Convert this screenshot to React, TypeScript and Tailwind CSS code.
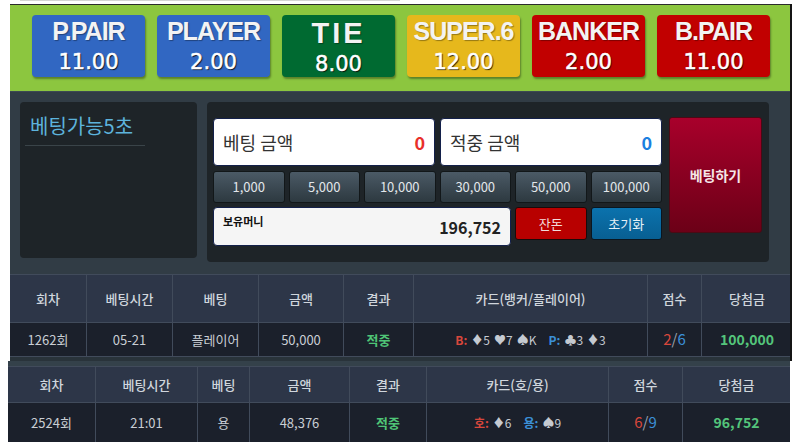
import React from 'react';

const KR = { fontFamily: '"Noto Sans CJK KR", "Noto Sans", sans-serif' };

interface Odd {
  label: string;
  value: string;
  bg: string;
  big?: boolean;
}

const odds: Odd[] = [
  { label: 'P.PAIR', value: '11.00', bg: 'bg-[#3167c2]' },
  { label: 'PLAYER', value: '2.00', bg: 'bg-[#3167c2]' },
  { label: 'TIE', value: '8.00', bg: 'bg-[#006a31]', big: true },
  { label: 'SUPER.6', value: '12.00', bg: 'bg-[#e6b81c]' },
  { label: 'BANKER', value: '2.00', bg: 'bg-[#c10000]' },
  { label: 'B.PAIR', value: '11.00', bg: 'bg-[#c10000]' },
];

const chips = ['1,000', '5,000', '10,000', '30,000', '50,000', '100,000'];

function OddButton({ item }: { item: Odd }) {
  return (
    <div
      className={`w-[113px] h-[62px] rounded-[4px] ${item.bg} flex flex-col items-center justify-center shadow-[1px_2px_2px_rgba(0,0,0,0.35)] text-[#f3f3f3]`}
    >
      <div
        className={`font-bold leading-none [text-shadow:1px_1px_1px_rgba(0,0,0,0.35)] ${
          item.big ? 'text-[29px] tracking-[3px] mt-[1px]' : 'text-[25px] tracking-[-1px]'
        }`}
        style={{ fontFamily: '"Liberation Sans", Arial, sans-serif' }}
      >
        {item.label}
      </div>
      <div
        className={`text-[21px] leading-none text-white [-webkit-text-stroke:0.5px_#fff] [text-shadow:1px_1px_1px_rgba(0,0,0,0.85)] ${item.big ? 'mt-[6px]' : 'mt-[8px]'}`}
        style={{ fontFamily: '"DejaVu Sans", sans-serif' }}
      >
        {item.value}
      </div>
    </div>
  );
}

interface Column {
  title: string;
}

function Score({ a, b }: { a: string; b: string }) {
  return (
    <span className="text-[15px]">
      <span className="text-[#d8473c]">{a}</span>
      <span className="text-[#9aa3ad]">/</span>
      <span className="text-[#3b90d8]">{b}</span>
    </span>
  );
}

function Cards({ first, firstCards, second, secondCards }: { first: string; firstCards: string[]; second: string; secondCards: string[] }) {
  return (
    <div className="flex items-center gap-[12px] text-[12px]">
      <div className="flex items-center gap-[4px]">
        <span className="text-[#d8473c] font-bold">{first}:</span>
        {firstCards.map((c) => (
          <span key={c} className="text-[#c5cad1]">{c}</span>
        ))}
      </div>
      <div className="flex items-center gap-[4px]">
        <span className="text-[#3b90d8] font-bold">{second}:</span>
        {secondCards.map((c) => (
          <span key={c} className="text-[#c5cad1]">{c}</span>
        ))}
      </div>
    </div>
  );
}

function ResultTable({
  cols,
  gridClass,
  headerH,
  rowH,
  cells,
}: {
  cols: Column[];
  gridClass: string;
  headerH: string;
  rowH: string;
  cells: React.ReactNode[];
}) {
  return (
    <div style={KR}>
      <div className={`grid ${gridClass} ${headerH} bg-[#2d3648] border-t border-b border-[#414b5b]`}>
        {cols.map((c, i) => (
          <div
            key={c.title}
            className={`flex items-center justify-center text-[13px] font-medium text-[#d0d6dd] ${i < cols.length - 1 ? 'border-r border-[#414b5b]' : ''}`}
          >
            {c.title}
          </div>
        ))}
      </div>
      <div className={`grid ${gridClass} ${rowH} bg-[#1b202b] border-b border-[#414b5b]`}>
        {cells.map((cell, i) => (
          <div
            key={i}
            className={`flex items-center justify-center text-[13px] text-[#c9ced4] ${i < cells.length - 1 ? 'border-r border-[#414b5b]' : ''}`}
          >
            {cell}
          </div>
        ))}
      </div>
    </div>
  );
}

export default function App() {
  const table1Cols: Column[] = [
    { title: '회차' },
    { title: '베팅시간' },
    { title: '베팅' },
    { title: '금액' },
    { title: '결과' },
    { title: '카드(뱅커/플레이어)' },
    { title: '점수' },
    { title: '당첨금' },
  ];
  const table2Cols: Column[] = [
    { title: '회차' },
    { title: '베팅시간' },
    { title: '베팅' },
    { title: '금액' },
    { title: '결과' },
    { title: '카드(호/용)' },
    { title: '점수' },
    { title: '당첨금' },
  ];

  return (
    <div className="w-[800px] h-[442px] overflow-hidden bg-white" style={KR}>
      <div className="h-[4px] border-t border-[#d4d4d4] ml-[20px] w-[380px]" />

      {/* window 1 */}
      <div className="ml-[10px] w-[782px] border-r-2 border-[#151515]">
        <div className="h-[87px] bg-[#8cc63f] border-t border-[#2b2b2b] pl-[22px] pt-[10px] flex gap-[12px]">
          {odds.map((o) => (
            <OddButton key={o.label} item={o} />
          ))}
        </div>

        <div className="bg-[#313c45] border-t border-[#3c4a52] pl-[10px] pr-[21px] pt-[10px] pb-[12px] flex gap-[10px]">
          <div className="w-[177px] h-[156px] rounded-[4px] bg-[#1e2428] pl-[5px] pt-[14px]">
            <div className="w-[120px] pl-[5px] pb-[9px] border-b border-[#3a4449] text-[20px] text-[#5db3dc] leading-none">
              베팅가능5초
            </div>
          </div>

          <div className="flex-1 h-[160px] rounded-[4px] bg-[#1e2428] pl-[6px] pt-[16px] flex gap-[7px]">
            <div className="w-[449px] flex flex-col">
              <div className="grid grid-cols-2 gap-[5px] h-[48px]">
                <div className="bg-white rounded-[4px] border border-[#13204a] flex items-center justify-between px-[9px]">
                  <span className="text-[18px] text-[#333]">베팅 금액</span>
                  <span className="text-[18px] font-bold text-[#e8302a]">0</span>
                </div>
                <div className="bg-white rounded-[4px] border border-[#13204a] flex items-center justify-between px-[9px]">
                  <span className="text-[18px] text-[#333]">적중 금액</span>
                  <span className="text-[18px] font-bold text-[#1b7fe0]">0</span>
                </div>
              </div>

              <div className="grid grid-cols-6 gap-[4px] h-[32px] mt-[5px]">
                {chips.map((c) => (
                  <div
                    key={c}
                    className="rounded-[3px] border border-[#121719] bg-gradient-to-b from-[#4b5a66] to-[#2d3940] flex items-center justify-center text-[13px] text-[#e2e6ea]"
                  >
                    {c}
                  </div>
                ))}
              </div>

              <div className="grid grid-cols-6 gap-[4px] h-[39px] mt-[4px]">
                <div className="col-span-4 bg-[#f5f5f5] rounded-[4px] border border-[#13204a] flex justify-between px-[9px]">
                  <span className="text-[11px] font-bold text-[#111] mt-[5px]">보유머니</span>
                  <span className="text-[16px] font-bold text-[#222] mt-[7px]">196,752</span>
                </div>
                <div className="h-[33px] rounded-[3px] border border-[#1a0a0a] bg-[#b80000] flex items-center justify-center text-[13px] text-[#f3dcdc]">
                  잔돈
                </div>
                <div className="h-[33px] rounded-[3px] border border-[#0a1620] bg-gradient-to-b from-[#0b72ad] to-[#085f92] flex items-center justify-center text-[13px] text-[#e6f0f6]">
                  초기화
                </div>
              </div>
            </div>

            <div className="w-[93px] h-[116px] -mt-[1px] rounded-[3px] border border-[#4a0a14] bg-gradient-to-b from-[#a8002b] to-[#6c0017] flex items-center justify-center text-[14px] font-bold text-[#f5e6e8]">
              베팅하기
            </div>
          </div>
        </div>

        <ResultTable
          cols={table1Cols}
          gridClass="grid-cols-[77px_86px_86px_85px_70px_234px_54px_90px]"
          headerH="h-[49px]"
          rowH="h-[34px]"
          cells={[
            '1262회',
            '05-21',
            '플레이어',
            '50,000',
            <span className="text-[#4fc476] font-bold">적중</span>,
            <Cards first="B" firstCards={['♦5', '♥7', '♠K']} second="P" secondCards={['♣3', '♦3']} />,
            <Score a="2" b="6" />,
            <span className="text-[14px] font-bold text-[#54c57b]">100,000</span>,
          ]}
        />
        <div className="h-[4px] bg-[#29333a]" />
      </div>

      {/* window 2 */}
      <div className="ml-[8px] w-[782px] bg-[#34414a] pt-[5px]">
        <ResultTable
          cols={table2Cols}
          gridClass="grid-cols-[88px_102px_52px_100px_77px_182px_74px_107px]"
          headerH="h-[37px]"
          rowH="h-[40px]"
          cells={[
            '2524회',
            '21:01',
            '용',
            '48,376',
            <span className="text-[#4fc476] font-bold">적중</span>,
            <Cards first="호" firstCards={['♦6']} second="용" secondCards={['♠9']} />,
            <Score a="6" b="9" />,
            <span className="text-[14px] font-bold text-[#54c57b]">96,752</span>,
          ]}
        />
      </div>
    </div>
  );
}
